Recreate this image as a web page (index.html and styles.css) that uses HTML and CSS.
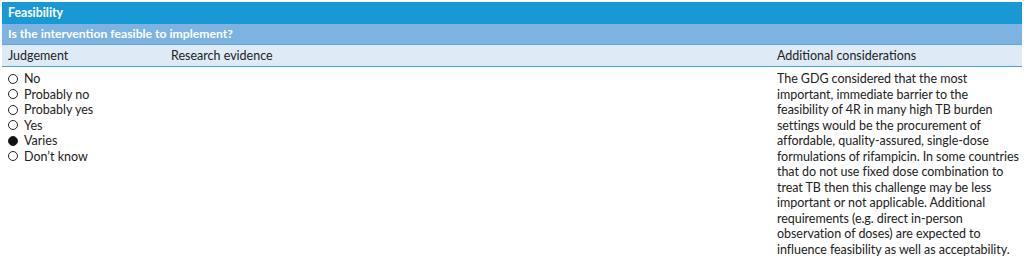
FILE: index.html
```html
<!DOCTYPE html>
<html>
<head>
<meta charset="utf-8">
<link rel="stylesheet" href="styles.css">
</head>
<body>
<div class="panel">
  <div class="title">Feasibility</div>
  <div class="question">Is the intervention feasible to implement?</div>
  <div class="grid head">
    <div class="cell">Judgement</div>
    <div class="cell">Research evidence</div>
    <div class="cell">Additional considerations</div>
  </div>
  <div class="grid body">
    <div class="cell">
      <ul class="options">
        <li><span class="radio"></span>No</li>
        <li><span class="radio"></span>Probably no</li>
        <li><span class="radio"></span>Probably yes</li>
        <li><span class="radio"></span>Yes</li>
        <li><span class="radio on"></span>Varies</li>
        <li><span class="radio"></span>Don’t know</li>
      </ul>
    </div>
    <div class="cell"></div>
    <div class="cell text">The GDG considered that the most important, immediate barrier to the feasibility of 4R in many high TB burden settings would be the procurement of affordable, quality-assured, single-dose formulations of rifampicin. In some countries that do not use fixed dose combination to treat TB then this challenge may be less important or not applicable. Additional requirements (e.g. direct in&#8209;person observation of doses) are expected to influence feasibility as well as acceptability.</div>
  </div>
</div>
</body>
</html>
```
FILE: styles.css
```css
html, body { margin: 0; padding: 0; background: #fff; }
body { font-family: Lato, "Noto Sans", sans-serif; font-size: 12.5px; color: #222; }
.panel { margin: 2px 2px 0 2px; }
.title { background: #1899d5; color: #fff; font-weight: bold; font-size: 12.3px; height: 22px; line-height: 22px; padding-left: 6px; }
.question { background: #7db3e1; color: #fff; font-weight: bold; font-size: 12.2px; height: 20px; line-height: 20px; padding-left: 6px; border-bottom: 1px solid #5ea6dc; }
.grid { display: grid; grid-template-columns: 163px 606px 1fr; }
.head { background: #dfeaf7; height: 21px; line-height: 21px; border-bottom: 1px solid #4aa3dc; }
.head .cell { padding-left: 6px; }
.body { border-bottom: 1px solid #4aa3dc; padding: 4px 0 3px; }
.body .cell { padding-left: 6px; line-height: 15.5px; }
.body .text { padding-right: 0; letter-spacing: -0.05px; }
.options { list-style: none; margin: 0; padding: 0; }
.options li { display: flex; align-items: center; gap: 6px; }
.radio { width: 10px; height: 10px; border: 1px solid #222; border-radius: 50%; box-sizing: border-box; flex: none; }
.radio.on { background: #111; }
```
